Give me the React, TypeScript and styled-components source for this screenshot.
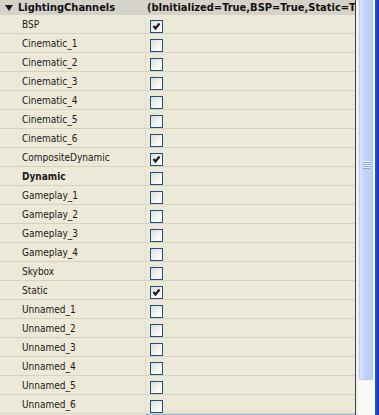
import styled, { createGlobalStyle } from "styled-components";

const rows: { name: string; checked: boolean; bold?: boolean }[] = [
    { name: "BSP", checked: true },
    { name: "Cinematic_1", checked: false },
    { name: "Cinematic_2", checked: false },
    { name: "Cinematic_3", checked: false },
    { name: "Cinematic_4", checked: false },
    { name: "Cinematic_5", checked: false },
    { name: "Cinematic_6", checked: false },
    { name: "CompositeDynamic", checked: true },
    { name: "Dynamic", checked: false, bold: true },
    { name: "Gameplay_1", checked: false },
    { name: "Gameplay_2", checked: false },
    { name: "Gameplay_3", checked: false },
    { name: "Gameplay_4", checked: false },
    { name: "Skybox", checked: false },
    { name: "Static", checked: true },
    { name: "Unnamed_1", checked: false },
    { name: "Unnamed_2", checked: false },
    { name: "Unnamed_3", checked: false },
    { name: "Unnamed_4", checked: false },
    { name: "Unnamed_5", checked: false },
    { name: "Unnamed_6", checked: false }
];

const GlobalStyle = createGlobalStyle`
    body {
        margin: 0;
        background: #ece9d8;
        font-family: "DejaVu Sans Condensed", "DejaVu Sans", sans-serif;
        font-stretch: condensed;
    }
`;

const Frame = styled.div`
    display: flex;
    width: 379px;
    height: 415px;
    overflow: hidden;
`;

const PropertyGrid = styled.div`
    width: 355px;
    flex: none;
    display: flex;
    flex-direction: column;
    background: #ece9d8;
    border-right: 1px solid #3f3f3f;
    overflow: hidden;
`;

const HeaderRow = styled.div`
    display: grid;
    grid-template-columns: 147px 1fr;
    height: 15px;
    flex: none;
    background: #d5d2ca;
    font-size: 11px;
    font-weight: bold;
    color: #111;
    line-height: 15px;
`;

const HeaderName = styled.div`
    display: flex;
    align-items: center;
    gap: 5px;
    padding-left: 5px;
`;

const HeaderValue = styled.div`
    white-space: nowrap;
    overflow: hidden;
    text-overflow: clip;
`;

const Row = styled.div`
    display: grid;
    grid-template-columns: 145px 1fr;
    height: 19px;
    flex: none;
    box-sizing: border-box;
    border-bottom: 1px solid #d6d2c2;
`;

const NameCell = styled.div<{ $bold?: boolean }>`
    padding-left: 22px;
    font-size: 10px;
    line-height: 19px;
    color: #1a1a1a;
    font-weight: ${(p) => (p.$bold ? "bold" : "normal")};
    white-space: nowrap;
`;

const ValueCell = styled.div`
    display: flex;
    align-items: flex-end;
    padding: 0 0 1px 4px;
    border-left: 1px solid #e0ddd0;
`;

const CheckBox = styled.div`
    width: 13px;
    height: 13px;
    box-sizing: border-box;
    border: 1px solid #1c5180;
    background: linear-gradient(135deg, #dcdcd4 0%, #f4f4f0 55%, #ffffff 100%);
    display: flex;
    align-items: center;
    justify-content: center;
`;

const BottomEdge = styled.div`
    height: 2px;
    margin-left: 146px;
    background: #a8b7d6;
    flex: none;
`;

const Scrollbar = styled.div`
    width: 19px;
    flex: none;
    display: flex;
    background: #fbfaf6;
`;

const TrackGap = styled.div<{ $w: number; $bg: string }>`
    width: ${(p) => p.$w}px;
    flex: none;
    background: ${(p) => p.$bg};
`;

const Thumb = styled.div`
    width: 14px;
    height: 380px;
    flex: none;
    box-sizing: border-box;
    border: 1px solid #b4c8f6;
    border-top: none;
    border-radius: 0 0 2px 2px;
    background: linear-gradient(to right, #dbe5fd 0%, #c3d3fb 40%, #b9cbf9 100%);
    display: flex;
    flex-direction: column;
    align-items: center;
    padding-top: 161px;
`;

const Grip = styled.div`
    width: 7px;
    height: 1px;
    background: #eef3ff;
    box-shadow: 0 1px 0 #8ca6e6;
    margin-bottom: 1px;
`;

const WindowEdge = styled.div`
    width: 4px;
    flex: none;
    background: linear-gradient(to right, #2a55e0, #0a2fc8);
`;

const Triangle = () => (
    <svg width="8" height="6" viewBox="0 0 8 6">
        <polygon points="0,0 8,0 4,6" fill="#1a1a1a" />
    </svg>
);

const Check = () => (
    <svg width="9" height="9" viewBox="0 0 9 9">
        <polyline points="1.5,4 3.5,6.5 7.5,1.5" fill="none" stroke="#1a1a1a" strokeWidth="2.2" />
    </svg>
);

const App = () => {
    return (
        <>
            <GlobalStyle />
            <Frame>
                <PropertyGrid>
                    <HeaderRow>
                        <HeaderName>
                            <Triangle />
                            LightingChannels
                        </HeaderName>
                        <HeaderValue>(bInitialized=True,BSP=True,Static=True,Dynamic=False)</HeaderValue>
                    </HeaderRow>
                    {rows.map((row) => (
                        <Row key={row.name}>
                            <NameCell $bold={row.bold}>{row.name}</NameCell>
                            <ValueCell>
                                <CheckBox>{row.checked && <Check />}</CheckBox>
                            </ValueCell>
                        </Row>
                    ))}
                    <BottomEdge />
                </PropertyGrid>
                <Scrollbar>
                    <TrackGap $w={3} $bg="#f3f1ec" />
                    <Thumb>
                        <Grip />
                        <Grip />
                        <Grip />
                        <Grip />
                    </Thumb>
                    <TrackGap $w={2} $bg="#ffffff" />
                </Scrollbar>
                <WindowEdge />
            </Frame>
        </>
    );
};

export default App;
